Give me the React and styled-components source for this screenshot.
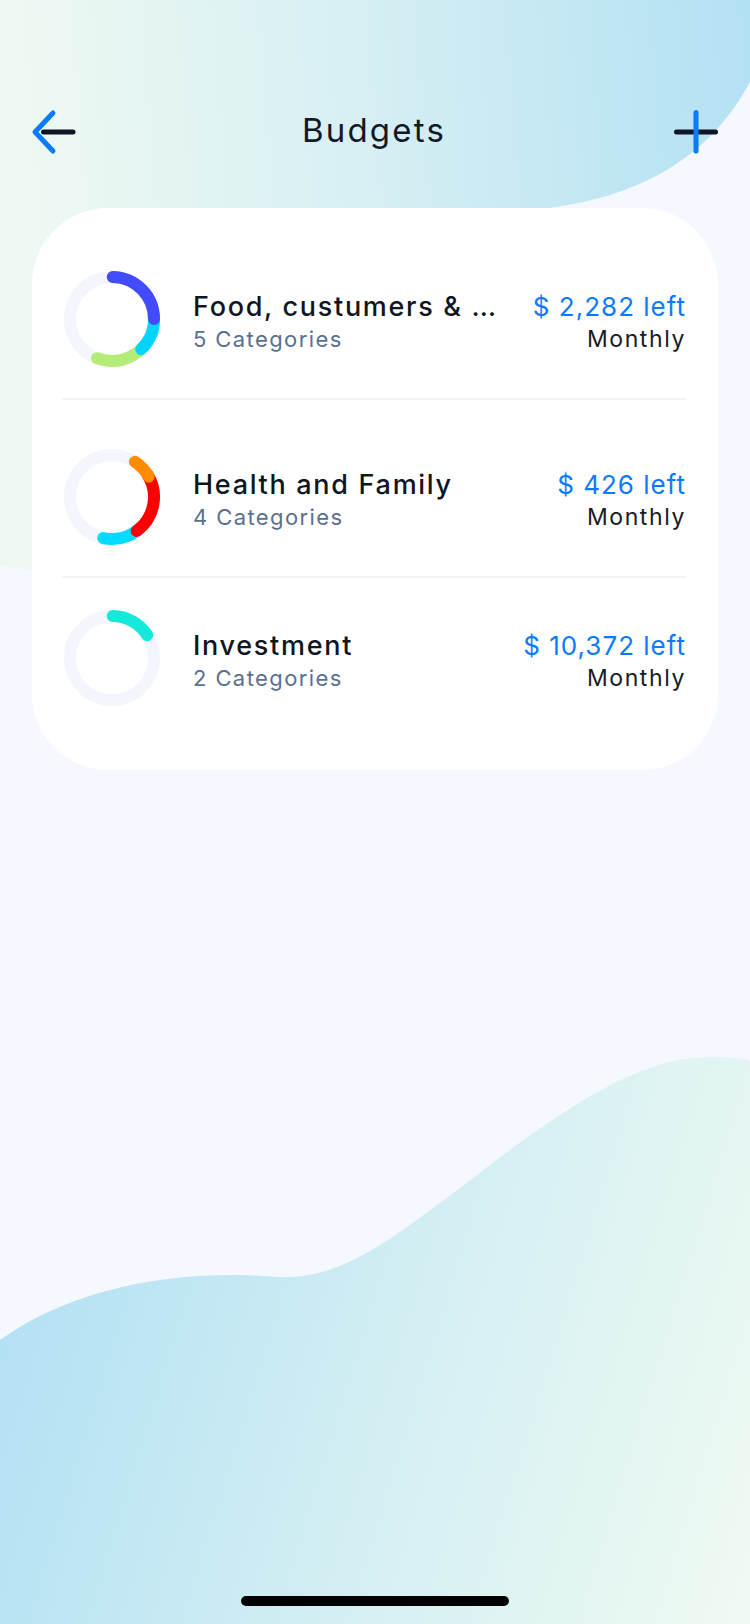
import React from "react";
import styled, { createGlobalStyle } from "styled-components";

const GlobalStyle = createGlobalStyle`
  html, body { margin: 0; padding: 0; background: #f5f8fe; }
  body { font-family: Inter, "Noto Sans", "Liberation Sans", sans-serif; -webkit-font-smoothing: antialiased; }
  * { box-sizing: border-box; }
`;

const Screen = styled.div`
  position: relative;
  width: 750px;
  height: 1624px;
  overflow: hidden;
  background: #f5f8fe;
  display: flex;
  flex-direction: column;
`;

const Backdrop = styled.svg`
  position: absolute;
  inset: 0;
  width: 750px;
  height: 1624px;
  z-index: 0;
`;

const Header = styled.header`
  position: relative;
  z-index: 1;
  height: 48px;
  margin-top: 108px;
  padding: 0 32px 0 30px;
  display: grid;
  grid-template-columns: 1fr auto 1fr;
  align-items: center;
`;

const IconButton = styled.button`
  border: 0;
  padding: 0;
  background: none;
  display: flex;
  justify-self: ${(p) => (p.$end ? "end" : "start")};
  cursor: pointer;
`;

const Title = styled.h1`
  margin: 0;
  padding-bottom: 4px;
  font-size: 33px;
  font-weight: 400;
  color: #111827;
  letter-spacing: 2.2px;
  line-height: 44px;
`;

const Card = styled.section`
  position: relative;
  z-index: 1;
  margin: 52px 32px 0;
  height: 562px;
  background: #ffffff;
  border-radius: 76px;
  padding: 61px 32px 0 30px;
  display: flex;
  flex-direction: column;
`;

const Row = styled.div`
  display: flex;
  align-items: center;
  padding: ${(p) => p.$top}px 0 29px;
  border-bottom: ${(p) => (p.$last ? "none" : "2px solid #f3f4f6")};
`;

const Info = styled.div`
  flex: 1;
  display: flex;
  flex-direction: column;
  margin-left: 31px;
  padding-top: 8px;
  min-width: 0;
`;

const Name = styled.div`
  font-size: 27px;
  font-weight: 500;
  color: #0f1523;
  line-height: 32px;
  letter-spacing: 1.7px;
  white-space: nowrap;
`;

const Sub = styled.div`
  font-size: 22px;
  font-weight: 400;
  color: #5b7091;
  line-height: 32px;
  letter-spacing: 1.4px;
`;

const Amounts = styled.div`
  display: flex;
  flex-direction: column;
  align-items: flex-end;
  text-align: right;
  padding-top: 8px;
`;

const Left = styled.div`
  font-size: 26px;
  font-weight: 400;
  color: #0a7bff;
  line-height: 32px;
  letter-spacing: 1px;
  white-space: nowrap;
`;

const Period = styled.div`
  font-size: 23px;
  font-weight: 400;
  color: #161b26;
  line-height: 32px;
  letter-spacing: 1.6px;
`;

const HomeBar = styled.div`
  position: relative;
  z-index: 1;
  margin: auto auto 18px;
  width: 268px;
  height: 10px;
  border-radius: 5px;
  background: #000;
`;

const polar = (cx, cy, r, deg) => {
  const a = ((deg - 90) * Math.PI) / 180;
  return [cx + r * Math.cos(a), cy + r * Math.sin(a)];
};

const arc = (a0, a1) => {
  const [x0, y0] = polar(50, 50, 42, a0);
  const [x1, y1] = polar(50, 50, 42, a1);
  const large = a1 - a0 > 180 ? 1 : 0;
  return `M ${x0} ${y0} A 42 42 0 ${large} 1 ${x1} ${y1}`;
};

const Donut = ({ segments }) => (
  <svg width="100" height="100" viewBox="0 0 100 100" style={{ flexShrink: 0 }}>
    <circle cx="50" cy="50" r="42" fill="none" stroke="#f3f6fd" strokeWidth="12" />
    {segments.map((s, i) => (
      <path key={i} d={arc(s.from, s.to)} fill="none" stroke={s.color} strokeWidth="12" strokeLinecap="round" />
    ))}
  </svg>
);

const budgets = [
  {
    name: "Food, custumers & …",
    sub: "5 Categories",
    left: "$ 2,282 left",
    top: 0,
    segments: [
      { from: 132, to: 201, color: "#b5ec77" },
      { from: 86, to: 136, color: "#00d5ff" },
      { from: 1, to: 90, color: "#434bff" },
    ],
  },
  {
    name: "Health and Family",
    sub: "4 Categories",
    left: "$ 426 left",
    top: 47,
    segments: [
      { from: 140, to: 192, color: "#00dcff" },
      { from: 58, to: 144, color: "#ff0000" },
      { from: 33, to: 61, color: "#ff8b00" },
    ],
  },
  {
    name: "Investment",
    sub: "2 Categories",
    left: "$ 10,372 left",
    top: 30,
    last: true,
    segments: [{ from: 1, to: 57, color: "#14e9dc" }],
  },
];

export default function App() {
  return (
    <>
      <GlobalStyle />
      <Screen>
        <Backdrop viewBox="0 0 750 1624" aria-hidden="true">
          <defs>
            <linearGradient id="topG" gradientUnits="userSpaceOnUse" x1="0" y1="60" x2="750" y2="0">
              <stop offset="0" stopColor="#eff9f2" />
              <stop offset="0.45" stopColor="#d8f0f3" />
              <stop offset="1" stopColor="#b3e1f4" />
            </linearGradient>
            <linearGradient id="botG" gradientUnits="userSpaceOnUse" x1="0" y1="1330" x2="750" y2="1560">
              <stop offset="0" stopColor="#b3e1f4" />
              <stop offset="0.55" stopColor="#d6f0f3" />
              <stop offset="1" stopColor="#eefaf2" />
            </linearGradient>
          </defs>
          <path
            d="M0 0 H750 V82 C700 175 610 208 500 212 L260 610 Q120 582 0 566 Z"
            fill="url(#topG)"
          />
          <path
            d="M0 1340 C70 1290 170 1268 280 1277 C340 1280 390 1240 460 1188 C560 1110 640 1055 713 1057 C730 1057 745 1059 750 1061 V1624 H0 Z"
            fill="url(#botG)"
          />
        </Backdrop>

        <Header>
          <IconButton aria-label="Back">
            <svg width="46" height="48" viewBox="0 0 46 48">
              <polyline points="23,5 5,24 23,43" fill="none" stroke="#0a7bff" strokeWidth="5" strokeLinecap="round" strokeLinejoin="round" />
              <line x1="13.5" y1="24" x2="43" y2="24" stroke="#0f1523" strokeWidth="5" strokeLinecap="round" />
            </svg>
          </IconButton>
          <Title>Budgets</Title>
          <IconButton $end aria-label="Add">
            <svg width="48" height="48" viewBox="0 0 48 48">
              <line x1="6.5" y1="24" x2="45.5" y2="24" stroke="#0f1523" strokeWidth="5" strokeLinecap="round" />
              <line x1="26" y1="4.5" x2="26" y2="43" stroke="#0a7bff" strokeWidth="5" strokeLinecap="round" />
            </svg>
          </IconButton>
        </Header>

        <Card>
          {budgets.map((b) => (
            <Row key={b.name} $top={b.top} $last={b.last}>
              <Donut segments={b.segments} />
              <Info>
                <Name>{b.name}</Name>
                <Sub>{b.sub}</Sub>
              </Info>
              <Amounts>
                <Left>{b.left}</Left>
                <Period>Monthly</Period>
              </Amounts>
            </Row>
          ))}
        </Card>

        <HomeBar />
      </Screen>
    </>
  );
}
